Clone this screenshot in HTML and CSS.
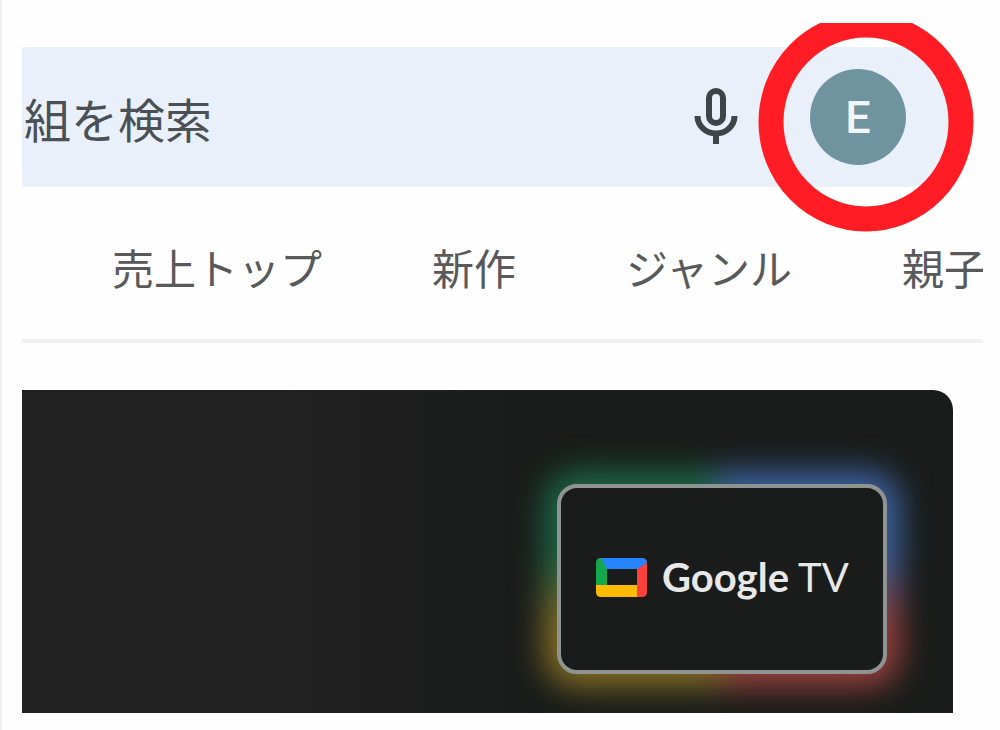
FILE: index.html
```html
<!DOCTYPE html>
<html lang="ja">
<head>
  <meta charset="UTF-8">
  <meta name="viewport" content="width=device-width, initial-scale=1.0">
  <title>Google Play</title>
  <link rel="stylesheet" href="styles.css">
</head>
<body>
  <div class="page">
    <!-- Search bar -->
    <header class="search-bar">
      <input type="search" class="search-input" placeholder="組を検索" aria-label="検索">
      <button type="button" class="mic-button" aria-label="音声検索">
        <svg width="44" height="58" viewBox="0 0 44 58" fill="none" stroke="#3f4448" stroke-width="6">
          <rect x="15" y="3" width="14" height="32" rx="7"/>
          <path d="M3.500 28a18.500 17.500 0 0 0 37 0M22 45v11"/>
        </svg>
      </button>
      <div class="account">
        <button type="button" class="avatar">E</button>
        <svg class="ring" width="218" height="210" viewBox="0 0 218 210" aria-hidden="true">
          <ellipse cx="109" cy="99" rx="95" ry="97" fill="none" stroke="#ff1c24" stroke-width="25"/>
        </svg>
      </div>
    </header>

    <!-- Category tabs -->
    <nav class="tabs">
      <a href="#">売上トップ</a>
      <a href="#">新作</a>
      <a href="#">ジャンル</a>
      <a href="#">親子</a>
    </nav>

    <!-- Banner -->
    <main class="banner">
      <div class="tv">
        <div class="tv-screen">
          <svg width="51" height="39" viewBox="0 0 51 39" aria-hidden="true">
            <path fill="#ffbb00" d="M0 27h42v12H5q-5 0-5-5z"/>
            <path fill="#12a84b" d="M5 0h6v27H0V5q0-5 5-5z"/>
            <path fill="#2684fc" d="M5 0h41q5 0 5 5l-9 6H11z"/>
            <path fill="#fb413b" d="M41 11l10-6v29q0 5-5 5h-5z"/>
          </svg>
          <span class="tv-name"><b>Google</b> TV</span>
        </div>
      </div>
    </main>
  </div>
</body>
</html>
```
FILE: styles.css
```css
* {
  box-sizing: border-box;
}

body {
  margin: 0;
  background-color: #fefefe;
  font-family: "Noto Sans", "Noto Sans CJK JP", sans-serif;
}

.page {
  min-height: 100vh;
  padding: 47px 17px 17px 20px;
  border-left: 2px solid #efefef;
}

.search-bar {
  display: flex;
  align-items: center;
  height: 140px;
  margin-right: 10px;
  padding-right: 67px;
  background-color: #e9f0f9;
  border-radius: 0 70px 70px 0;
}

.search-input {
  flex: 1;
  min-width: 0;
  height: 72px;
  padding: 0 0 0 2px;
  border: none;
  outline: none;
  background: none;
  color: #4b5054;
  font-family: "Noto Sans CJK JP", sans-serif;
  font-size: 47px;
}

.search-input::placeholder {
  color: #4b5054;
  opacity: 1;
}

.mic-button {
  height: 58px;
  margin-right: 72px;
  padding: 0;
  border: none;
  background: none;
  cursor: pointer;
}

.mic-button svg {
  display: block;
}

.account {
  position: relative;
}

.avatar {
  display: block;
  width: 96px;
  height: 96px;
  padding: 0;
  border: none;
  border-radius: 50%;
  background-color: #6f949f;
  color: #f2f6f7;
  font-family: Roboto, sans-serif;
  font-size: 45px;
  font-weight: 500;
  cursor: pointer;
}

/* marker around the account button */
.ring {
  position: absolute;
  top: -46px;
  left: -53px;
  pointer-events: none;
}

.tabs {
  display: flex;
  gap: 110px;
  height: 156px;
  padding: 49px 0 0 90px;
  border-bottom: 4px solid #f1f1f1;
  overflow: hidden;
}

.tabs a {
  flex: none;
  color: #58595b;
  font-family: "Noto Sans CJK JP", sans-serif;
  font-size: 42px;
  line-height: 62px;
  text-decoration: none;
}

.banner {
  display: flex;
  justify-content: flex-end;
  height: 323px;
  margin: 47px 30px 0 0;
  padding: 94px 66px 0 0;
  border-radius: 0 20px 0 0;
  background: linear-gradient(90deg, #212121 28%, #191c1a 54%);
  overflow: hidden;
}

.tv {
  position: relative;
  width: 330px;
  height: 190px;
}

/* coloured glow behind the screen */
.tv::before {
  content: "";
  position: absolute;
  inset: -12px;
  border-radius: 30px;
  background: conic-gradient(#3f66a8 0 23%, #a0433f 29% 48%, #8a7226 52% 71%, #1c6b48 77% 98%, #3f66a8);
  filter: blur(16px);
}

.tv-screen {
  position: relative;
  display: flex;
  align-items: center;
  gap: 15px;
  height: 100%;
  padding: 0 0 4px 35px;
  border: 4px solid #8f9391;
  border-radius: 20px;
  background-color: #191c1a;
}

.tv-name {
  color: #e8e8e8;
  font-family: Lato, sans-serif;
  font-size: 40px;
  white-space: nowrap;
}
```
